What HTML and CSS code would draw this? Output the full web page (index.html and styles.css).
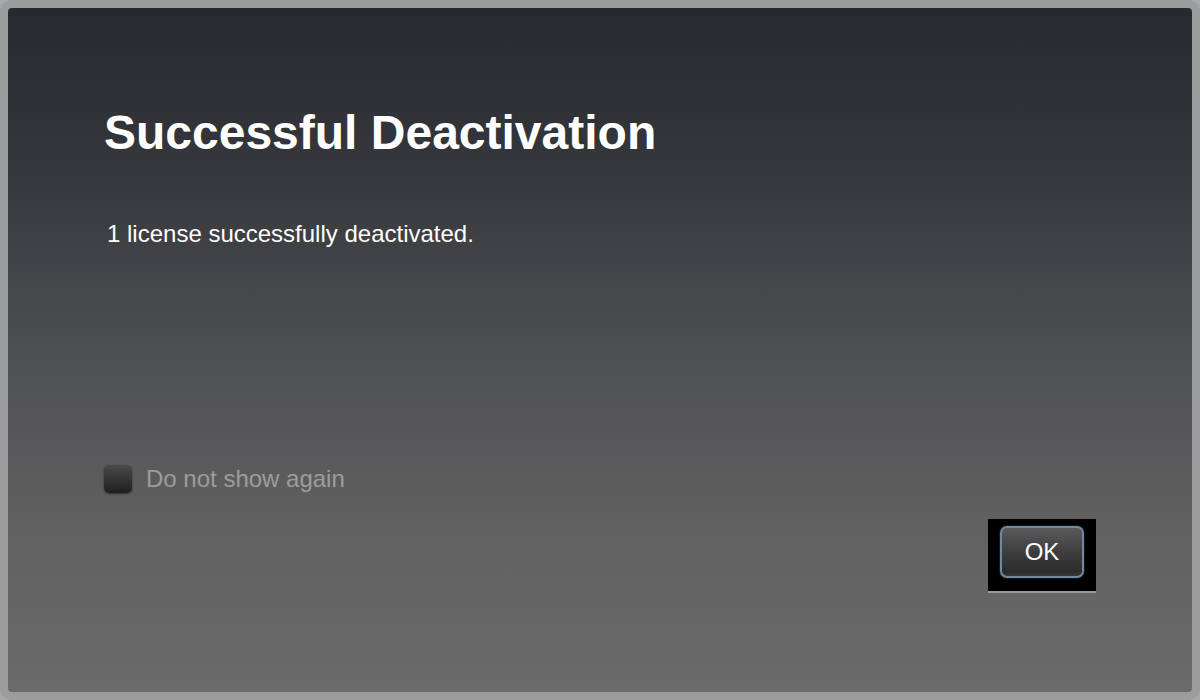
FILE: index.html
```html
<!DOCTYPE html>
<html lang="en">
  <head>
    <meta charset="UTF-8" />
    <meta name="viewport" content="width=device-width, initial-scale=1.0" />
    <title>Successful Deactivation</title>
    <link rel="stylesheet" href="styles.css">
  </head>

  <body>
    <div class="frame">
      <div class="dialog">
        <h1 class="title">Successful Deactivation</h1>
        <p class="message">1 license successfully deactivated.</p>

        <label class="again">
          <span class="check"></span>
          <span class="again-text">Do not show again</span>
        </label>

        <div class="footer">
          <div class="ok-well">
            <button class="ok">OK</button>
          </div>
        </div>
      </div>
    </div>
  </body>
</html>
```

FILE: styles.css
```css
html,
body {
  margin: 0;
  height: 100%;
  background: #a6a8ab;
  font-family: "Liberation Sans", Arial, Helvetica, sans-serif;
}

.frame {
  box-sizing: border-box;
  height: 700px;
  border: 8px solid #9b9c9e;
  border-radius: 12px;
  background: #9b9c9e;
  overflow: hidden;
}

.dialog {
  box-sizing: border-box;
  height: 100%;
  padding: 97px 96px 0 96px;
  background: linear-gradient(to bottom, #262930 0%, #36383c 25%, #4e4f51 50%, #606061 75%, #6b6b6b 100%);
}

.title {
  margin: 0;
  font-size: 48px;
  line-height: 56px;
  font-weight: bold;
  color: #ffffff;
}

.message {
  margin: 59px 0 0;
  padding-left: 3px;
  font-size: 24px;
  line-height: 28px;
  color: #ffffff;
}

.again {
  display: flex;
  align-items: center;
  gap: 14px;
  margin-top: 217px;
  height: 28px;
}

.check {
  width: 28px;
  height: 28px;
  border-radius: 5px;
  background: linear-gradient(to bottom, #4a4a4b, #1f1f20);
  box-shadow: 0 1px 2px rgba(0, 0, 0, 0.5);
}

.again-text {
  font-size: 24px;
  line-height: 28px;
  color: #9c9c9c;
}

.footer {
  display: flex;
  justify-content: flex-end;
  margin-top: 26px;
}

.ok-well {
  width: 108px;
  height: 74px;
  box-sizing: border-box;
  padding: 7px 12px 0;
  background: #000000;
  border-bottom: 2px solid #9a9a9a;
}

.ok {
  width: 84px;
  height: 52px;
  border: 2px solid #6f8aa0;
  border-radius: 7px;
  background: linear-gradient(to bottom, #5a5a5c 0%, #3f3e3f 50%, #2c2b2b 92%, #3a3a3a 100%);
  color: #ffffff;
  font-family: "Liberation Sans", Arial, Helvetica, sans-serif;
  font-size: 24px;
  box-shadow: 0 0 2px rgba(120, 150, 175, 0.6);
}
```
